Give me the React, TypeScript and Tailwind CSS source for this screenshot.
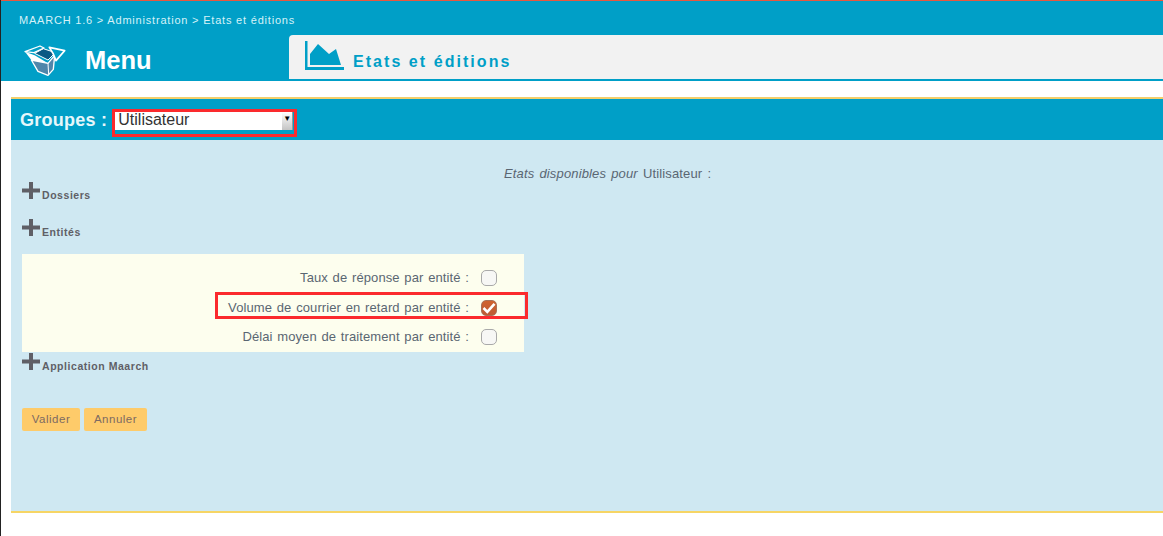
import React from 'react';

function Plus() {
  return (
    <svg width="18" height="17" viewBox="0 0 18 17" className="shrink-0">
      <path d="M7 0h4v6.500h7v4h-7V17H7v-6.500H0v-4h7z" fill="#5f5f66" />
    </svg>
  );
}

function BoxIcon() {
  return (
    <svg width="50" height="40" viewBox="0 0 150 120" className="mt-[4px]">
      <path d="M44 40L70 26l36 12-22 22z" fill="#0b5a84" stroke="#fff" strokeWidth="3" />
      <path d="M34 60l50 10 20-24-4 42-16 18-30-12z" fill="#4f86aa" stroke="#fff" strokeWidth="4" strokeLinejoin="round" />
      <path d="M84 70l2 34" stroke="#fff" strokeWidth="3" />
      <path d="M15 35L60 18l12 6-30 14z" fill="#009fc7" stroke="#fff" strokeWidth="4" strokeLinejoin="round" />
      <path d="M15 35l19 25 50 10-40-24z" fill="#fff" />
      <path d="M88 22l46 10-26 30-8-20z" fill="#009fc7" stroke="#fff" strokeWidth="5" strokeLinejoin="round" />
    </svg>
  );
}

function ChartIcon() {
  return (
    <svg width="40" height="30" viewBox="0 0 40 30">
      <path d="M0 0h2.500v26H39v3H0z" fill="#009fc7" />
      <path d="M5 24V13l8-10 11 10 7-5 5 16z" fill="#009fc7" />
    </svg>
  );
}

function Check({ checked }: { checked?: boolean }) {
  if (checked) {
    return (
      <span className="w-4 h-4 rounded-[5px] bg-gradient-to-b from-[#d0632f] to-[#bd5a33] border border-[#a8725a] flex items-center justify-center">
        <svg width="14" height="12" viewBox="0 0 14 12">
          <path d="M1.500 6l3.800 3.800L12.500 1.800" fill="none" stroke="#fff" strokeWidth="2.600" />
        </svg>
      </span>
    );
  }
  return <span className="w-4 h-4 rounded-[5px] bg-[#f7f7f5] border border-[#a9a9a9]" />;
}

function Section({ label, className }: { label: string; className: string }) {
  return (
    <div className={`flex items-start h-[21px] ${className}`}>
      <Plus />
      <span className="ml-[2px] mt-[6px] text-[10.500px] leading-[14px] font-bold tracking-[0.55px] text-[#5f5f66]">{label}</span>
    </div>
  );
}

function Row({ label, checked, marked, className = '' }: { label: string; checked?: boolean; marked?: boolean; className?: string }) {
  return (
    <div className={`relative h-[29px] flex items-center justify-end pr-[27px] ${className}`}>
      {marked && <div className="absolute left-[193px] top-[-1px] w-[313px] h-[27px] border-[3px] border-[#fb2a2d]" />}
      <span className="text-[13px] tracking-[0.1px] [word-spacing:1px] text-[#5a6672] mr-[12px]">{label}</span>
      <Check checked={checked} />
    </div>
  );
}

export default function App() {
  return (
    <div className="w-[1163px] h-[536px] overflow-hidden bg-white border-l border-[#222] font-['Liberation_Sans',Arial,sans-serif]">
      <header className="h-[81px] bg-[#009fc7] border-t border-[#e8583f]">
        <div className="h-[34px] pl-[18px] pt-[13px] text-[11px] leading-[13px] tracking-[0.8px] text-[#d6f2f8]">
          MAARCH 1.6 &gt; Administration &gt; Etats et éditions
        </div>
        <div className="flex h-[46px]">
          <div className="w-[288px] flex items-center pl-[19px]">
            <BoxIcon />
            <span className="ml-[15px] mt-[4px] text-[25.500px] font-bold text-white">Menu</span>
          </div>
          <div className="flex-1 h-[44px] bg-[#f2f2f2] rounded-tl-[4px] flex items-start pl-[16px] pt-[6px]">
            <ChartIcon />
            <span className="ml-[8px] mt-[12px] text-[16px] leading-[18px] font-bold tracking-[2.050px] text-[#009fc7]">
              Etats et éditions
            </span>
          </div>
        </div>
      </header>

      <main className="mt-[16px] ml-[10px] h-[416px] border-t-2 border-b-2 border-t-[#f3cf6b] border-b-[#f6d565] bg-[#cfe8f2]">
        <div className="h-[41px] bg-[#009fc7] flex items-center pl-[9px]">
          <span className="mt-[1px] text-[18px] font-bold tracking-[0.25px] text-[#e6f7fb]">Groupes :</span>
          <div className="ml-[5px] mt-[7px] w-[185px] h-[28px] border-[3px] border-[#fb2a2d] bg-[#009fc7]">
            <div className="relative w-[178px] h-[18px] bg-white text-[16px] leading-[16px] pl-[3px] text-[#333]">
              Utilisateur
              <span className="absolute right-0 top-0 w-[11px] h-[18px] bg-gradient-to-b from-white to-[#c4c4c4] border-r border-[#999] text-[8px] leading-[13px] text-center text-black">▼</span>
            </div>
          </div>
        </div>

        <div className="relative pl-[11px] pt-[42px]">
          <p className="absolute left-[493px] top-[24px] text-[13px] tracking-[0.15px] [word-spacing:1.300px] italic text-[#5a6672]">
            Etats disponibles pour <span className="not-italic">Utilisateur :</span>
          </p>
          <Section label="Dossiers" className="" />
          <Section label="Entités" className="mt-[16px]" />
          <div className="mt-[14px] w-[502px] h-[98px] bg-[#fdfeee] pt-[9px]">
            <Row label="Taux de réponse par entité :" />
            <Row label="Volume de courrier en retard par entité :" checked marked className="mt-[1px]" />
            <Row label="Délai moyen de traitement par entité :" />
          </div>
          <Section label="Application Maarch" className="mt-[1px]" />
          <div className="mt-[34px] flex gap-[4px]">
            <button className="w-[58px] h-[23px] rounded-[2px] bg-[#fecb6a] text-[11.500px] tracking-[0.5px] text-[#7d6a62]">Valider</button>
            <button className="w-[63px] h-[23px] rounded-[2px] bg-[#fecb6a] text-[11.500px] tracking-[0.5px] text-[#7d6a62]">Annuler</button>
          </div>
        </div>
      </main>
    </div>
  );
}
